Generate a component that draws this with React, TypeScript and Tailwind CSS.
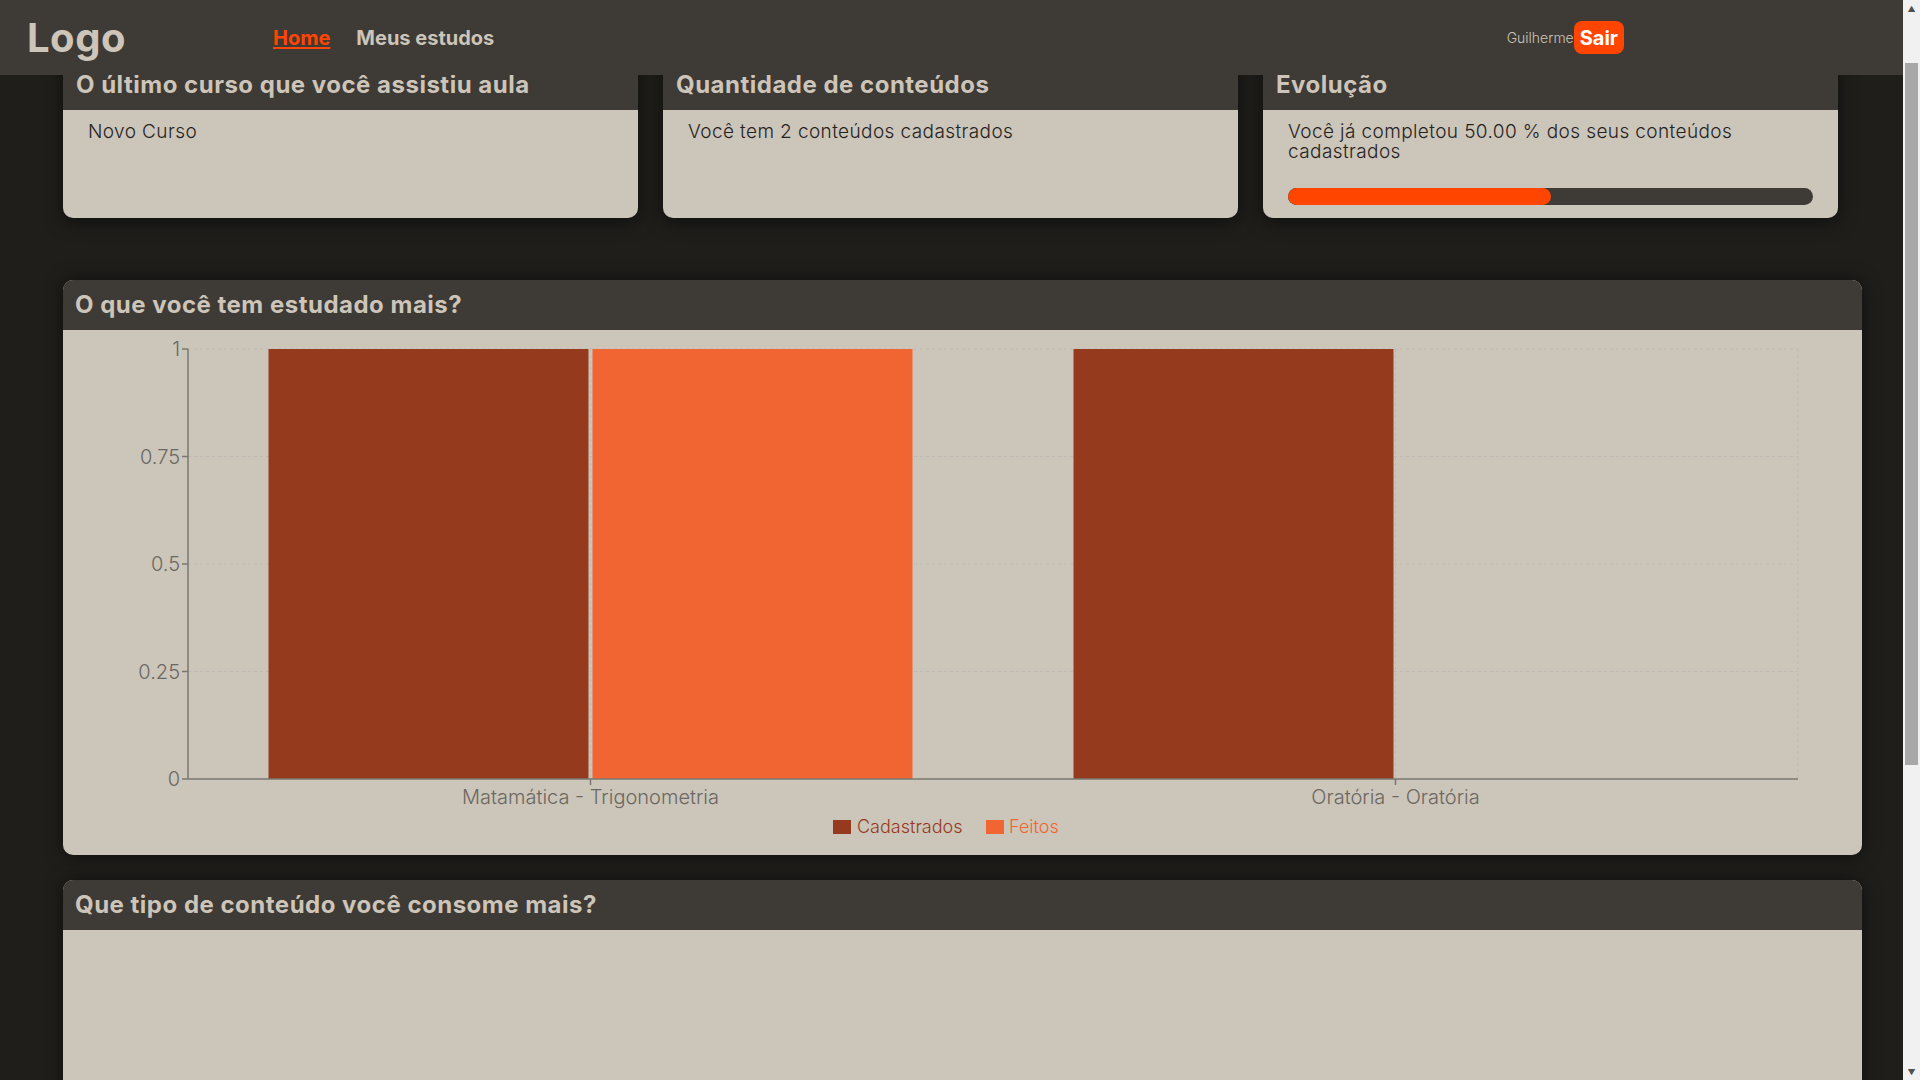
import React from "react";

const font = { fontFamily: "Inter, 'Open Sans', sans-serif" };

function Header() {
  return (
    <header className="fixed left-0 right-[17px] top-0 z-10 flex h-[75px] items-center bg-[#3e3a35] pl-[27px] pr-[279px]">
      <span className="text-[40px] font-bold tracking-[0.5px] text-[#cdc5b9]">Logo</span>
      <nav className="ml-[147px] flex items-center gap-[26px] text-[20px] font-bold">
        <a href="#" className="text-[#ff4500] underline underline-offset-2">
          Home
        </a>
        <a href="#" className="text-[#cdc5b9]">
          Meus estudos
        </a>
      </nav>
      <div className="ml-auto flex items-center">
        <span className="text-[14px] font-light text-[#cdc5b9]">Guilherme</span>
        <button className="h-[33px] rounded-lg bg-[#ff4500] px-[6px] text-[20px] font-bold text-white">Sair</button>
      </div>
    </header>
  );
}

function Card({ title, children }: { title: string; children: React.ReactNode }) {
  return (
    <div className="flex h-[158px] w-[575px] flex-col overflow-hidden rounded-b-[10px] bg-[#ccc5b9] shadow-[0_4px_18px_rgba(0,0,0,0.55)]">
      <div className="flex h-[50px] items-center bg-[#3e3a35] pl-[13px]">
        <h2 className="text-[24px] font-bold tracking-[0.5px] text-[#cdc5b9]">{title}</h2>
      </div>
      <div className="px-[25px] pt-[12px] text-[19px] font-light leading-[20px] tracking-[0.4px] text-[#26231f]">
        {children}
      </div>
    </div>
  );
}

function Section({ title, children }: { title: string; children: React.ReactNode }) {
  return (
    <section className="overflow-hidden rounded-[10px] bg-[#ccc5b9] shadow-[0_0_18px_rgba(0,0,0,0.55)]">
      <div className="flex h-[50px] items-center bg-[#3e3a35] pl-[12px]">
        <h2 className="text-[24px] font-bold tracking-[0.5px] text-[#cdc5b9]">{title}</h2>
      </div>
      {children}
    </section>
  );
}

const yTicks = [
  { v: "1", y: 19 },
  { v: "0.75", y: 126.5 },
  { v: "0.5", y: 234 },
  { v: "0.25", y: 341.5 },
  { v: "0", y: 449 },
];

function StudyChart() {
  const cad = "#953a1d";
  const feitos = "#f06532";
  return (
    <svg width="1799" height="525" className="block" style={{ fontFamily: "Inter, sans-serif", fontWeight: 300 }}>
      {/* grid */}
      <g stroke="#bdbab4" strokeDasharray="3 3" fill="none">
        {yTicks.slice(0, 4).map((t) => (
          <line key={t.v} x1="125" x2="1735" y1={t.y} y2={t.y} />
        ))}
        <line x1="527.5" x2="527.5" y1="19" y2="449" />
        <line x1="1332.5" x2="1332.5" y1="19" y2="449" />
        <line x1="1735" x2="1735" y1="19" y2="449" />
      </g>
      {/* bars */}
      <rect x="205.5" y="19" width="320" height="430" fill={cad} />
      <rect x="529.5" y="19" width="320" height="430" fill={feitos} />
      <rect x="1010.5" y="19" width="320" height="430" fill={cad} />
      {/* axes */}
      <g stroke="#7a7772" strokeWidth="1.5">
        <line x1="125" x2="125" y1="19" y2="449" />
        <line x1="125" x2="1735" y1="449" y2="449" />
        {yTicks.map((t) => (
          <line key={t.v} x1="119" x2="125" y1={t.y} y2={t.y} />
        ))}
        <line x1="527.5" x2="527.5" y1="449" y2="455" />
        <line x1="1332.5" x2="1332.5" y1="449" y2="455" />
      </g>
      <g fill="#6b6863" fontSize="20">
        {yTicks.map((t) => (
          <text key={t.v} x="117" y={t.y + 7} textAnchor="end">
            {t.v}
          </text>
        ))}
        <text x="527.5" y="474" textAnchor="middle">
          Matamática - Trigonometria
        </text>
        <text x="1332.5" y="474" textAnchor="middle">
          Oratória - Oratória
        </text>
      </g>
      {/* legend */}
      <g fontSize="18">
        <rect x="770" y="490" width="18" height="14" fill={cad} />
        <text x="794" y="503" fill={cad}>
          Cadastrados
        </text>
        <rect x="923" y="490" width="18" height="14" fill={feitos} />
        <text x="946" y="503" fill={feitos}>
          Feitos
        </text>
      </g>
    </svg>
  );
}

function Scrollbar() {
  return (
    <div className="flex h-screen w-[17px] shrink-0 flex-col bg-[#f1f1f1]">
      <div className="flex h-[17px] items-center justify-center text-[8px] leading-none text-[#505050]">▲</div>
      <div className="mt-[46px] h-[702px] px-[2px]">
        <div className="h-full w-full bg-[#a8a8a8]" />
      </div>
      <div className="mt-auto flex h-[17px] items-center justify-center text-[8px] leading-none text-[#505050]">▼</div>
    </div>
  );
}

export default function App() {
  return (
    <div className="flex h-screen overflow-hidden bg-[#1f1e1b]" style={font}>
      <div className="min-w-0 flex-1">
        <Header />
        <main className="pb-[40px] pl-[63px] pr-[41px] pt-[60px]">
          <div className="flex gap-[25px]">
            <Card title="O último curso que você assistiu aula">Novo Curso</Card>
            <Card title="Quantidade de conteúdos">Você tem 2 conteúdos cadastrados</Card>
            <Card title="Evolução">
              <p>Você já completou 50.00 % dos seus conteúdos cadastrados</p>
              <div className="mt-[26px] h-[17px] w-full overflow-hidden rounded-full bg-[#3e3a35]">
                <div className="h-full rounded-full bg-[#ff4500]" style={{ width: "50%" }} />
              </div>
            </Card>
          </div>

          <div className="mt-[62px]">
            <Section title="O que você tem estudado mais?">
              <StudyChart />
            </Section>
          </div>

          <div className="mt-[25px]">
            <Section title="Que tipo de conteúdo você consome mais?">
              <div className="h-[420px]" />
            </Section>
          </div>
        </main>
      </div>
      <Scrollbar />
    </div>
  );
}
